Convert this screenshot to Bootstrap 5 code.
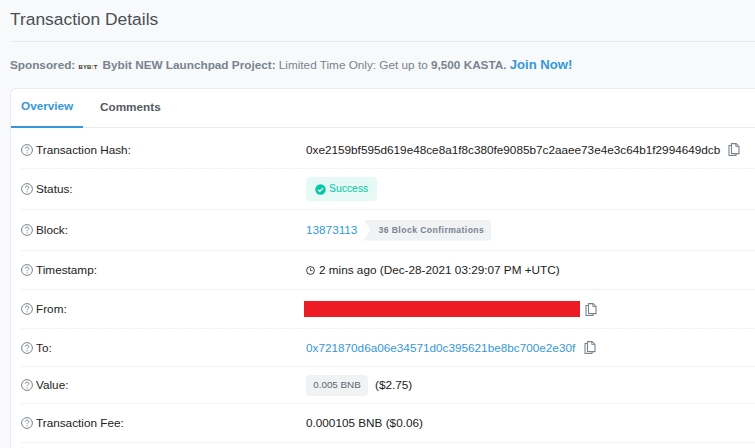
<!DOCTYPE html>
<html lang="en">
<head>
<meta charset="utf-8">
<title>Transaction Details</title>
<link href="https://cdn.jsdelivr.net/npm/bootstrap@5.3.0/dist/css/bootstrap.min.css" rel="stylesheet">
<style>
html,body{height:448px;overflow:hidden}
body{background:#f8f9fa;font-family:"Liberation Sans",Arial,sans-serif;font-size:11.75px;color:#1e2022}
.page-wrap{padding:0 0 0 10px;height:448px;overflow:hidden}
.head-title{font-size:17.4px;font-weight:400;color:#4a4f55;margin:0;height:42px;line-height:39px;border-bottom:1px solid #e7eaf3}
.sponsor-line{height:46px;line-height:46px;color:#77838f;font-size:11.75px;white-space:nowrap}
.sponsor-line b{font-weight:700}
.sponsor-logo{display:inline-block;font-size:6px;font-weight:700;color:#333;letter-spacing:.1px;margin:0 7px 0 0;width:17px;line-height:1}
.sponsor-logo i{color:#f7a600;font-style:normal}
.join-link{color:#3498db;font-weight:700;font-size:13.1px;text-decoration:none}
.sheet{background:#fff;border:1px solid #e7eaf3;border-right:0;border-radius:6px 0 0 0;height:400px;margin-right:-10px}
.tabs-bar{height:39px;border-bottom:1px solid #e7eaf3;display:flex;font-weight:700;font-size:11.75px}
.tab-item{display:flex;align-items:center;text-decoration:none;height:39px}
.tab-item.on{color:#3498db;width:72px;padding:0 0 3px 10px;border-bottom:2px solid #3498db}
.tab-item.off{color:#555a61;padding:0 0 3px 17px}
.info-row{display:flex;align-items:center;margin-left:10px;border-bottom:1px solid #f1f3f8;white-space:nowrap}
.h41{height:41px}.h39{height:39px}.h38{height:38px}.h37{height:37px}
.hash-row{padding-top:3px}
.info-label{width:285px;display:flex;align-items:center;gap:3px;color:#1e2022;flex:none}
.qmark{width:12px;height:12px;flex:none}
.copy-ico{width:12px;height:13px;flex:none;margin-left:8px}
.copy-near{margin-left:5px}
.copy-far{margin-left:9px}
.addr-link,.addr-link:hover{color:#3498db;text-decoration:none}
.ok-pill{display:inline-flex;align-items:center;gap:3px;background:#e6f9f4;color:#00c9a7;height:24px;width:71px;padding:0 0 0 9px;border-radius:4px;font-size:10.4px}
.conf-chip{display:inline-flex;align-items:center;height:21px;width:128px;background:#f1f2f4;color:#77838f;font-size:8.6px;font-weight:700;letter-spacing:.45px;padding:0 0 0 15px;margin-left:6px;border-radius:0 3px 3px 0;clip-path:polygon(0 0,100% 0,100% 100%,0 100%,7px 50%)}
.val-chip{display:inline-flex;align-items:center;background:#f1f2f4;color:#5f6670;height:21px;width:62px;justify-content:center;border-radius:4px;font-size:9.8px;margin-right:7px}
.redact-bar{width:276px;height:16px;background:#ed1c24;margin-left:-2px;display:block}
.clock-ico{width:9px;height:9px;margin-right:4px;flex:none}
</style>
</head>
<body>
<svg width="0" height="0" class="d-block" aria-hidden="true">
  <symbol id="q" viewBox="0 0 12 12"><circle cx="6" cy="6" r="5.4" fill="none" stroke="#77838f" stroke-width="1"/><path d="M4.3 4.7c0-1 .8-1.6 1.7-1.6s1.7.6 1.7 1.5c0 1.2-1.6 1.3-1.6 2.6" fill="none" stroke="#77838f" stroke-width="1"/><circle cx="6.1" cy="8.8" r=".65" fill="#77838f"/></symbol>
  <symbol id="c" viewBox="0 0 12 13"><path d="M3.5 2.5H1v10h7v-2" fill="none" stroke="#77838f" stroke-width="1.1"/><path d="M3.5 .6h4.6L11 3.4v7.2H3.5z" fill="none" stroke="#77838f" stroke-width="1.1"/><path d="M7.8.8v2.8h3" fill="none" stroke="#77838f" stroke-width=".9"/></symbol>
</svg>
<div class="page-wrap">
  <h1 class="head-title">Transaction Details</h1>
  <div class="sponsor-line"><b>Sponsored:</b> <span class="sponsor-logo">BYB<i>!</i>T</span><b>Bybit NEW Launchpad Project:</b> Limited Time Only: Get up to <b>9,500 KASTA.</b> <a class="join-link" href="#">Join Now!</a></div>
  <div class="sheet">
    <div class="tabs-bar">
      <a class="tab-item on" href="#">Overview</a>
      <a class="tab-item off" href="#">Comments</a>
    </div>
    <div class="info-row h41 hash-row"><div class="info-label"><svg class="qmark"><use href="#q"/></svg>Transaction Hash:</div><span>0xe2159bf595d619e48ce8a1f8c380fe9085b7c2aaee73e4e3c64b1f2994649dcb</span><svg class="copy-ico"><use href="#c"/></svg></div>
    <div class="info-row h41"><div class="info-label"><svg class="qmark"><use href="#q"/></svg>Status:</div><span class="ok-pill"><svg width="11" height="11" viewBox="0 0 11 11"><circle cx="5.5" cy="5.5" r="5.2" fill="#00c9a7"/><path d="M3 5.7l1.8 1.7L8 4" fill="none" stroke="#fff" stroke-width="1.3"/></svg>Success</span></div>
    <div class="info-row h41"><div class="info-label"><svg class="qmark"><use href="#q"/></svg>Block:</div><a class="addr-link" href="#">13873113</a><span class="conf-chip">36 Block Confirmations</span></div>
    <div class="info-row h39"><div class="info-label"><svg class="qmark"><use href="#q"/></svg>Timestamp:</div><svg class="clock-ico" viewBox="0 0 9 9"><circle cx="4.5" cy="4.5" r="3.9" fill="none" stroke="#1e2022" stroke-width=".9"/><path d="M4.5 2.2v2.5h2" fill="none" stroke="#1e2022" stroke-width=".8"/></svg><span>2 mins ago (Dec-28-2021 03:29:07 PM +UTC)</span></div>
    <div class="info-row h39"><div class="info-label"><svg class="qmark"><use href="#q"/></svg>From:</div><span class="redact-bar"></span><svg class="copy-ico copy-near"><use href="#c"/></svg></div>
    <div class="info-row h38"><div class="info-label"><svg class="qmark"><use href="#q"/></svg>To:</div><a class="addr-link" href="#">0x721870d6a06e34571d0c395621be8bc700e2e30f</a><svg class="copy-ico copy-far"><use href="#c"/></svg></div>
    <div class="info-row h37"><div class="info-label"><svg class="qmark"><use href="#q"/></svg>Value:</div><span class="val-chip">0.005 BNB</span><span>($2.75)</span></div>
    <div class="info-row h39"><div class="info-label"><svg class="qmark"><use href="#q"/></svg>Transaction Fee:</div><span>0.000105 BNB ($0.06)</span></div>
  </div>
</div>
<script src="https://cdn.jsdelivr.net/npm/bootstrap@5.3.0/dist/js/bootstrap.bundle.min.js"></script>
</body>
</html>
